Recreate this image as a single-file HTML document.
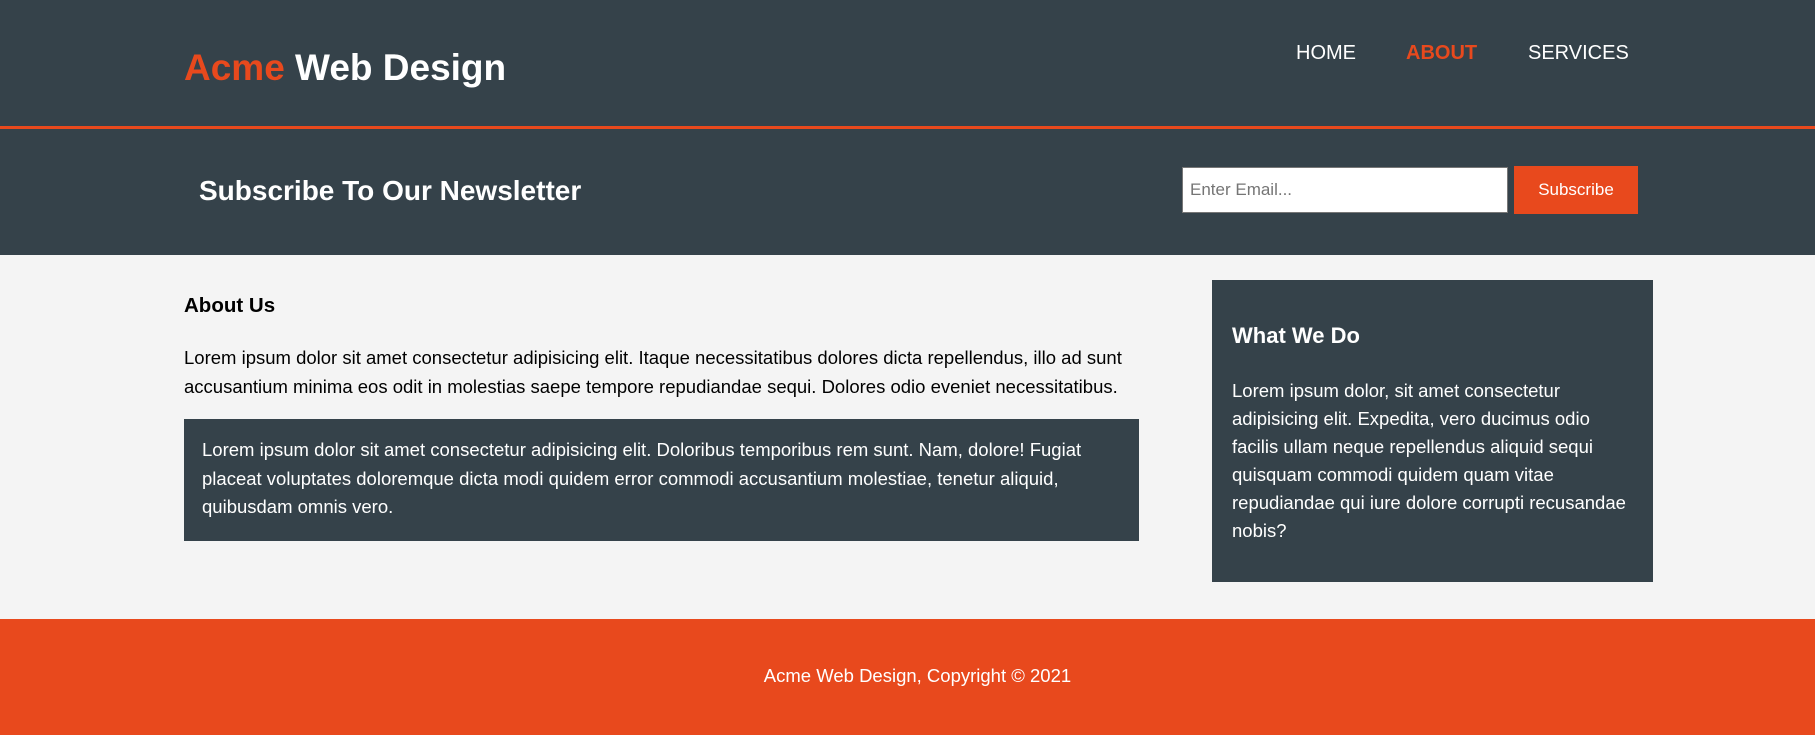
<!DOCTYPE html>
<html><head><meta charset="utf-8"><style>
*{margin:0;padding:0;box-sizing:border-box}
html,body{width:1815px;height:735px;overflow:hidden;background:#f4f4f4;font-family:"Liberation Sans",Arial,sans-serif}
.a{position:absolute;white-space:nowrap}
</style></head><body>
<div class="a" style="left:0;top:0;width:1815px;height:126px;background:#35424a"></div>
<div class="a" style="left:0;top:126px;width:1815px;height:3px;background:#e8491d"></div>
<div class="a" style="left:0;top:129px;width:1815px;height:126px;background:#35424a"></div>
<div class="a" style="left:184px;top:48.7px;font-size:37px;line-height:37px;font-weight:bold;color:#fff"><span style="color:#e8491d">Acme</span> Web Design</div>
<div class="a" style="left:1296px;top:43px;font-size:20px;line-height:21px;color:#fff">HOME</div>
<div class="a" style="left:1406px;top:43px;font-size:20px;line-height:21px;color:#e8491d;font-weight:bold">ABOUT</div>
<div class="a" style="left:1528px;top:43px;font-size:20px;line-height:21px;color:#fff">SERVICES</div>
<div class="a" style="left:199px;top:177px;font-size:28px;line-height:28px;font-weight:bold;color:#fff">Subscribe To Our Newsletter</div>
<div class="a" style="left:1182px;top:167px;width:326px;height:46px;background:#fff;border:1px solid #777;font-size:17px;line-height:44px;color:#757575;padding-left:7px">Enter Email...</div>
<div class="a" style="left:1514px;top:166px;width:124px;height:48px;background:#e8491d;color:#fff;font-size:17px;line-height:48px;text-align:center">Subscribe</div>
<div class="a" style="left:184px;top:295.6px;font-size:20.5px;line-height:20.5px;font-weight:bold;color:#000">About Us</div>
<div class="a" style="left:184px;top:344.3px;width:960px;white-space:normal;font-size:18.5px;line-height:28.5px;color:#000">Lorem ipsum dolor sit amet consectetur adipisicing elit. Itaque necessitatibus dolores dicta repellendus, illo ad sunt accusantium minima eos odit in molestias saepe tempore repudiandae sequi. Dolores odio eveniet necessitatibus.</div>
<div class="a" style="left:184px;top:419px;width:955px;height:122px;background:#35424a"></div>
<div class="a" style="left:202px;top:436.3px;width:925px;white-space:normal;font-size:18.5px;line-height:28.5px;color:#fff">Lorem ipsum dolor sit amet consectetur adipisicing elit. Doloribus temporibus rem sunt. Nam, dolore! Fugiat placeat voluptates doloremque dicta modi quidem error commodi accusantium molestiae, tenetur aliquid, quibusdam omnis vero.</div>
<div class="a" style="left:1212px;top:280px;width:441px;height:302px;background:#35424a"></div>
<div class="a" style="left:1232px;top:325.4px;font-size:22px;line-height:22px;font-weight:bold;color:#fff">What We Do</div>
<div class="a" style="left:1232px;top:376.6px;width:405px;white-space:normal;font-size:18.5px;line-height:28px;color:#fff">Lorem ipsum dolor, sit amet consectetur adipisicing elit. Expedita, vero ducimus odio facilis ullam neque repellendus aliquid sequi quisquam commodi quidem quam vitae repudiandae qui iure dolore corrupti recusandae nobis?</div>
<div class="a" style="left:0;top:619px;width:1815px;height:116px;background:#e8491d"></div>
<div class="a" style="left:10px;top:662px;width:1815px;text-align:center;font-size:18.5px;line-height:28.5px;color:#fff">Acme Web Design, Copyright © 2021</div>
</body></html>
